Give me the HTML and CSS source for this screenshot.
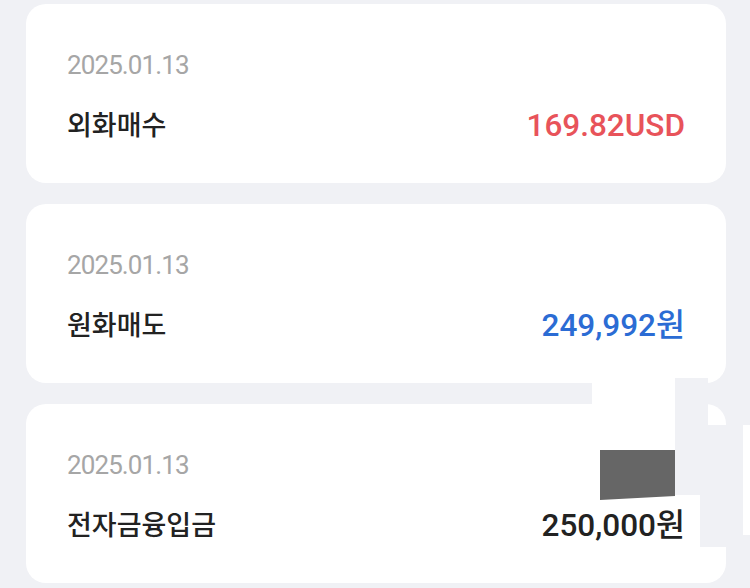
FILE: index.html
```html
<!DOCTYPE html>
<html lang="ko">
<head>
<meta charset="utf-8">
<link rel="stylesheet" href="styles.css">
</head>
<body>
<div class="page">
  <div class="list">
    <div class="card">
      <div class="date">2025.01.13</div>
      <div class="row">
        <span class="title">외화매수</span>
        <span class="amount red">169.82USD</span>
      </div>
    </div>
    <div class="card">
      <div class="date">2025.01.13</div>
      <div class="row">
        <span class="title">원화매도</span>
        <span class="amount blue">249,992원</span>
      </div>
    </div>
    <div class="card">
      <div class="date">2025.01.13</div>
      <div class="row">
        <span class="title">전자금융입금</span>
        <span class="amount dark">250,000원</span>
      </div>
    </div>
  </div>
  <div class="patch patch-white-gap"></div>
  <div class="patch patch-gray-a"></div>
  <div class="patch patch-gray-b"></div>
  <div class="patch patch-white-strip"></div>
  <div class="patch patch-white-low"></div>
  <div class="patch patch-dark"></div>
</div>
</body>
</html>
```
FILE: styles.css
```css
html, body {
  margin: 0;
  padding: 0;
}
body {
  background: #f0f1f5;
  font-family: "Roboto", "Noto Sans CJK KR", sans-serif;
  width: 750px;
  height: 588px;
  overflow: hidden;
}
.page {
  position: relative;
  width: 750px;
  height: 588px;
}
.list {
  display: flex;
  flex-direction: column;
  gap: 21px;
  padding: 4px 24px 0 26px;
}
.card {
  background: #ffffff;
  border-radius: 20px;
  height: 179px;
  box-sizing: border-box;
  padding: 45px 41px 0 41px;
}
.date {
  font-size: 26px;
  line-height: 32px;
  color: #a6a6a6;
  letter-spacing: -0.9px;
  height: 32px;
}
.row {
  margin-top: 25px;
  display: flex;
  justify-content: space-between;
  align-items: center;
  height: 40px;
}
.title {
  font-size: 27px;
  line-height: 40px;
  font-weight: 500;
  color: #222222;
}
.amount {
  position: relative;
  z-index: 2;
  font-size: 31.5px;
  line-height: 40px;
  font-weight: 500;
}
.red { color: #e8535a; }
.blue { color: #2b6cd4; }
.dark { color: #222222; }

.patch {
  position: absolute;
  z-index: 1;
}
.patch-white-gap {
  left: 592px;
  top: 380px;
  width: 83px;
  height: 30px;
  background: #ffffff;
}
.patch-gray-a {
  left: 675px;
  top: 378px;
  width: 33px;
  height: 169px;
  background: #f0f1f5;
}
.patch-gray-b {
  left: 708px;
  top: 425px;
  width: 35px;
  height: 122px;
  background: #f0f1f5;
}
.patch-white-strip {
  left: 743px;
  top: 425px;
  width: 7px;
  height: 110px;
  background: #ffffff;
}
.patch-white-low {
  left: 675px;
  top: 495px;
  width: 25px;
  height: 52px;
  background: #ffffff;
}
.patch-dark {
  left: 600px;
  top: 450px;
  width: 75px;
  height: 50px;
  background: #666666;
  clip-path: polygon(0 0, 100% 0, 100% 92%, 0 100%);
}
```
